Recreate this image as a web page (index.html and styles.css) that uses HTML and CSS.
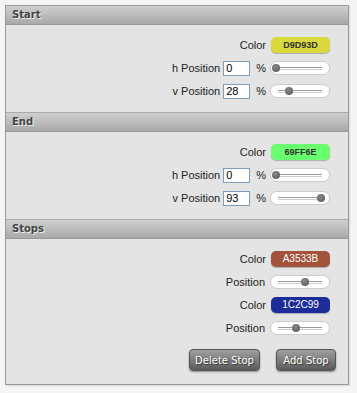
FILE: index.html
```html
<!DOCTYPE html>
<html lang="en">
<head>
    <meta charset="UTF-8">
    <meta name="viewport" content="width=device-width, initial-scale=1.0">
    <title>Gradient Editor</title>
    <link rel="stylesheet" href="styles.css">
</head>
<body>
    <div class="editor">
        <!-- Start -->
        <div class="section">
            <div class="section-head">Start</div>
            <div class="section-body">
                <div class="row">
                    <span class="label">Color</span>
                    <span class="swatch light" style="background-color: #d9d93d;">D9D93D</span>
                </div>
                <div class="row">
                    <span class="label">h Position</span>
                    <input type="text" class="num" value="0">
                    <span class="pct">%</span>
                    <span class="slider"><span class="track"><span class="knob" style="left: 0%;"></span></span></span>
                </div>
                <div class="row">
                    <span class="label">v Position</span>
                    <input type="text" class="num" value="28">
                    <span class="pct">%</span>
                    <span class="slider"><span class="track"><span class="knob" style="left: 28%;"></span></span></span>
                </div>
            </div>
        </div>

        <!-- End -->
        <div class="section">
            <div class="section-head">End</div>
            <div class="section-body">
                <div class="row">
                    <span class="label">Color</span>
                    <span class="swatch light" style="background-color: #69ff6e;">69FF6E</span>
                </div>
                <div class="row">
                    <span class="label">h Position</span>
                    <input type="text" class="num" value="0">
                    <span class="pct">%</span>
                    <span class="slider"><span class="track"><span class="knob" style="left: 0%;"></span></span></span>
                </div>
                <div class="row">
                    <span class="label">v Position</span>
                    <input type="text" class="num" value="93">
                    <span class="pct">%</span>
                    <span class="slider"><span class="track"><span class="knob" style="left: 93%;"></span></span></span>
                </div>
            </div>
        </div>

        <!-- Stops -->
        <div class="section">
            <div class="section-head">Stops</div>
            <div class="section-body">
                <div class="row">
                    <span class="label">Color</span>
                    <span class="swatch" style="background-color: #a3533b;">A3533B</span>
                </div>
                <div class="row">
                    <span class="label">Position</span>
                    <span class="slider"><span class="track"><span class="knob" style="left: 60%;"></span></span></span>
                </div>
                <div class="row">
                    <span class="label">Color</span>
                    <span class="swatch" style="background-color: #1c2c99;">1C2C99</span>
                </div>
                <div class="row">
                    <span class="label">Position</span>
                    <span class="slider"><span class="track"><span class="knob" style="left: 42%;"></span></span></span>
                </div>
                <div class="button-row">
                    <button class="btn delete-btn">Delete Stop</button>
                    <button class="btn add-btn">Add Stop</button>
                </div>
            </div>
        </div>
    </div>
</body>
</html>
```

FILE: styles.css
```css
body {
    margin: 0;
    padding: 5px;
    background-color: #f5f5f5;
    font-family: "Liberation Sans", Arial, sans-serif;
    font-size: 11px;
    color: #222;
}
.editor {
    width: 342px;
    border: 1px solid #999;
    background-color: #e4e4e4;
    box-shadow: 1px 1px 1px #ddd;
}
.section + .section {
    border-top: 1px solid #aaa;
}
.section-head {
    height: 18px;
    line-height: 18px;
    padding-left: 6px;
    border-bottom: 1px solid #999;
    background: linear-gradient(#cfcfcf, #a9a9a9);
    font-family: "DejaVu Sans", Verdana, sans-serif;
    font-size: 10px;
    font-weight: bold;
    color: #444;
    text-shadow: 1px 1px 0 #eee;
}
.section-body {
    padding: 12px 18px 13px;
    display: flex;
    flex-direction: column;
    gap: 7px;
}
.row {
    display: flex;
    justify-content: flex-end;
    align-items: center;
    height: 16px;
}
.label {
    margin-right: 5px;
}
.swatch {
    width: 59px;
    height: 16px;
    line-height: 16px;
    border-radius: 5px;
    text-align: center;
    font-size: 10px;
    color: #fff;
    box-shadow: 0 1px 1px rgba(0, 0, 0, 0.25);
}
.swatch.light {
    color: #333;
    font-weight: bold;
    font-size: 9px;
}
.num {
    box-sizing: border-box;
    width: 27px;
    height: 15px;
    padding: 0 2px;
    margin: 0 0 0 -2px;
    border: 1px solid #7f9db9;
    background-color: #fff;
    font-family: "Liberation Sans", Arial, sans-serif;
    font-size: 11px;
    color: #000;
}
.pct {
    margin: 0 4px 0 6px;
}
.slider {
    position: relative;
    box-sizing: border-box;
    width: 60px;
    height: 14px;
    border: 1px solid #ccc;
    border-radius: 7px;
    background-color: #fff;
}
.slider::before {
    content: "";
    position: absolute;
    left: 7px;
    right: 7px;
    top: 5px;
    height: 1px;
    border-top: 1px solid #999;
    border-bottom: 1px solid #ccc;
}
.track {
    position: absolute;
    left: 1px;
    right: 9px;
    top: 2px;
    height: 8px;
}
.knob {
    position: absolute;
    top: 0;
    width: 8px;
    height: 8px;
    border-radius: 50%;
    background: radial-gradient(circle at 40% 35%, #888, #555);
}
.button-row {
    display: flex;
    justify-content: flex-end;
    gap: 16px;
    margin-top: 6px;
    margin-right: -6px;
}
.btn {
    height: 22px;
    padding: 0;
    border: 1px solid #555;
    border-radius: 4px;
    background: linear-gradient(#a0a0a0, #5a5a5a);
    color: #fff;
    font-family: "DejaVu Sans", Verdana, sans-serif;
    font-size: 10px;
    text-shadow: 1px 1px 1px #333;
    box-shadow: 0 1px 2px rgba(0, 0, 0, 0.4);
    cursor: pointer;
}
.delete-btn {
    width: 71px;
}
.add-btn {
    width: 60px;
}
```
